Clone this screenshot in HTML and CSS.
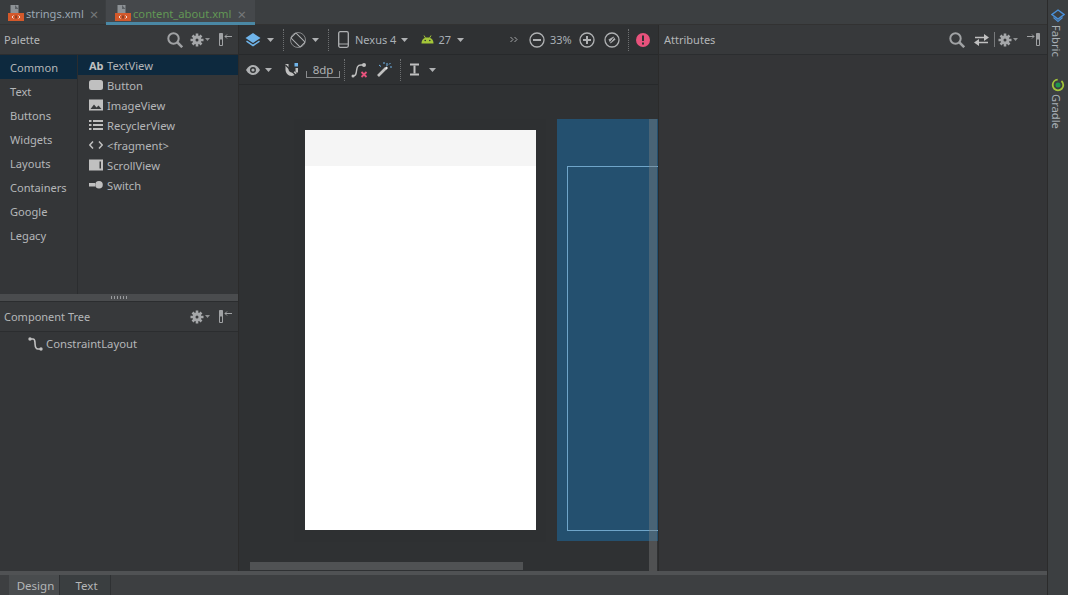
FILE: index.html
```html
<!DOCTYPE html>
<html lang="en">
<head>
<meta charset="utf-8">
<title>content_about.xml</title>
<link rel="stylesheet" href="styles.css">
</head>
<body>
<svg class="defs" width="0" height="0">
  <defs>
    <symbol id="search" viewBox="0 0 16 16"><circle cx="6.500" cy="6.500" r="5.200" fill="none" stroke="currentColor" stroke-width="2"/><path d="M10.400 10.400 15.200 15.200" stroke="currentColor" stroke-width="2.600" fill="none"/></symbol>
    <symbol id="gear" viewBox="0 0 14 14"><path d="M7 .5v13M.5 7h13M2.500 2.500l9 9M11.500 2.500l-9 9" stroke="currentColor" stroke-width="2.600"/><circle cx="7" cy="7" r="4.400" fill="currentColor"/><circle cx="7" cy="7" r="1.500" fill="#3a3c3e"/></symbol>
    <symbol id="pinleft" viewBox="0 0 13 13"><path d="M.5 .5h3v12h-3z" fill="none" stroke="currentColor"/><path d="M.5 .5h3v6h-3z" fill="currentColor"/><path d="M6 3.500h7M6 3.500l2-2M6 3.500l2 2" stroke="currentColor" fill="none"/></symbol>
    <symbol id="xml" viewBox="0 0 16 16"><path d="M2.500 0h8v8h-8z" fill="#8d9296"/><path d="M7 0v4h3.500z" fill="#5b6064"/><path d="M0 8h16v8H0z" fill="#d3592b"/><path d="M5.500 10.500 4 12l1.500 1.500M10.500 10.500 12 12l-1.500 1.500" fill="none" stroke="#f3e1d8"/><path d="M8 10.500v3" stroke="#4a2a20"/></symbol>
    <symbol id="caret" viewBox="0 0 7 4"><path d="M0 0h7L3.500 4z" fill="currentColor"/></symbol>
    <symbol id="dropdown" viewBox="0 0 7 4"><path d="M0 0h7L3.500 4z" fill="#afb1b3"/></symbol>
  </defs>
</svg>
<div class="app">
  <div class="workspace">
    <div class="tabs">
      <div class="tab">
        <svg class="tab-icon"><use href="#xml"/></svg>
        <span class="tab-name">strings.xml</span>
        <span class="tab-close">×</span>
      </div>
      <div class="tab tab-active">
        <svg class="tab-icon"><use href="#xml"/></svg>
        <span class="tab-name tab-name-green">content_about.xml</span>
        <span class="tab-close">×</span>
      </div>
    </div>
    <div class="columns">
      <aside class="left">
        <div class="panel-head">
          <span class="head-title">Palette</span>
          <span class="head-tools">
            <svg class="i16"><use href="#search"/></svg>
            <span class="gear-wrap"><svg class="i14"><use href="#gear"/></svg><svg class="tiny-caret"><use href="#caret"/></svg></span>
            <svg class="i13"><use href="#pinleft"/></svg>
          </span>
        </div>
        <div class="palette">
          <ul class="cats">
            <li class="cat cat-active">Common</li>
            <li class="cat">Text</li>
            <li class="cat">Buttons</li>
            <li class="cat">Widgets</li>
            <li class="cat">Layouts</li>
            <li class="cat">Containers</li>
            <li class="cat">Google</li>
            <li class="cat">Legacy</li>
          </ul>
          <ul class="items">
            <li class="item item-active"><span class="ab">Ab</span>TextView</li>
            <li class="item"><svg class="i14" viewBox="0 0 14 14"><rect y="1" width="14" height="10" rx="2.500" fill="#c0c0c0"/></svg>Button</li>
            <li class="item"><svg class="i14" viewBox="0 0 14 14"><path d="M0 .5h14v11H0z" fill="#c0c0c0"/><path d="M1.500 10 5 5.500l2.500 3 2-2 3 3.500z" fill="#3a3c3e"/></svg>ImageView</li>
            <li class="item"><svg class="i14" viewBox="0 0 14 14"><path d="M0 1h2.500v2H0zM4 1h10v2H4zM0 5h2.500v2H0zM4 5h10v2H4zM0 9h2.500v2H0zM4 9h10v2H4z" fill="#c0c0c0"/></svg>RecyclerView</li>
            <li class="item"><svg class="i14" viewBox="0 0 14 14"><path d="M4 2.500 .8 6 4 9.500M10 2.500 13.200 6 10 9.500" fill="none" stroke="#c0c0c0" stroke-width="1.500"/></svg>&lt;fragment&gt;</li>
            <li class="item"><svg class="i14" viewBox="0 0 14 14"><path d="M0 .5h14v11H0z" fill="#c0c0c0"/><path d="M10.500 2.500h1.500v7h-1.500z" fill="#3a3c3e"/></svg>ScrollView</li>
            <li class="item"><svg class="i14" viewBox="0 0 14 14"><path d="M0 4h6v3.500H0z" fill="#c0c0c0"/><circle cx="10" cy="5.800" r="3.800" fill="#c0c0c0"/></svg>Switch</li>
          </ul>
        </div>
        <div class="grip"><span class="grip-dots"></span></div>
        <div class="panel-head tree-head">
          <span class="head-title">Component Tree</span>
          <span class="head-tools">
            <span class="gear-wrap"><svg class="i14"><use href="#gear"/></svg><svg class="tiny-caret"><use href="#caret"/></svg></span>
            <svg class="i13"><use href="#pinleft"/></svg>
          </span>
        </div>
        <div class="tree">
          <svg class="tree-icon" viewBox="0 0 15 15"><path d="M2 2h3c2 0 1.800 1.500 2 4 .2 3 0 6 3 6h3" fill="none" stroke="#c0c0c0" stroke-width="1.600"/><circle cx="2" cy="2" r="1.700" fill="#c0c0c0"/><circle cx="13" cy="12" r="1.700" fill="#c0c0c0"/></svg>
          <span>ConstraintLayout</span>
        </div>
      </aside>
      <main class="center">
        <div class="toolbar">
          <svg class="tb-layers" viewBox="0 0 16 16"><path d="M8 1 15.500 6 8 11 .5 6z" fill="#6fb4ea"/><path d="M1.500 9.200 8 13.500l6.500-4.300" fill="none" stroke="#6fb4ea" stroke-width="1.500"/></svg>
          <svg class="dd dd-first"><use href="#dropdown"/></svg>
          <span class="sep sep-a"></span>
          <svg class="tb-rotate" viewBox="0 0 16 16"><circle cx="8" cy="8" r="7.500" fill="none" stroke="#9a9c9e" stroke-width=".8"/><rect x="4.500" y="1.500" width="7" height="13" rx="1" transform="rotate(-45 8 8)" fill="#2f3133" stroke="#afb1b3"/></svg>
          <svg class="dd dd-six"><use href="#dropdown"/></svg>
          <span class="sep sep-b"></span>
          <svg class="tb-phone" viewBox="0 0 11 17"><rect x=".7" y=".7" width="9.600" height="15.600" rx="1.500" fill="none" stroke="#afb1b3" stroke-width="1.300"/><path d="M1 13h9" stroke="#afb1b3"/></svg>
          <span class="tb-text tb-device">Nexus 4</span>
          <svg class="dd"><use href="#dropdown"/></svg>
          <svg class="tb-android" viewBox="0 0 13 9"><path d="M.5 8.500C.5 4.500 3 2.500 6.500 2.500s6 2 6 6z" fill="#a4c639"/><path d="M3 .5l1.500 2.500M10 .5 8.500 3" stroke="#a4c639"/><circle cx="4.200" cy="5.500" r=".8" fill="#2f3133"/><circle cx="8.800" cy="5.500" r=".8" fill="#2f3133"/></svg>
          <span class="tb-text tb-api">27</span>
          <svg class="dd dd-six"><use href="#dropdown"/></svg>
          <svg class="chev" viewBox="0 0 8 7"><path d="M.5 1 3 3.500.5 6M4.500 1 7 3.500 4.500 6" fill="none" stroke="#a5a7a9"/></svg>
          <svg class="tb-zoom tb-minus" viewBox="0 0 16 16"><circle cx="8" cy="8" r="7" fill="none" stroke="#afb1b3" stroke-width="1.300"/><path d="M4 8h8" stroke="#afb1b3" stroke-width="2"/></svg>
          <span class="tb-text tb-pct">33%</span>
          <svg class="tb-zoom" viewBox="0 0 16 16"><circle cx="8" cy="8" r="7" fill="none" stroke="#afb1b3" stroke-width="1.300"/><path d="M4 8h8M8 4v8" stroke="#afb1b3" stroke-width="2"/></svg>
          <svg class="tb-zoom tb-fit" viewBox="0 0 16 16"><circle cx="8" cy="8" r="7" fill="none" stroke="#afb1b3" stroke-width="1.300"/><path d="M4.500 7.500l5-3 2 3-5 4z" fill="#afb1b3"/><path d="M6 10.500 10 5.500" stroke="#2f3133"/></svg>
          <span class="sep sep-c"></span>
          <svg class="tb-alert" viewBox="0 0 14 14"><circle cx="7" cy="7" r="7" fill="#e8527c"/><path d="M6 2.500h2v5.500H6zM6 9.500h2v2H6z" fill="#2f3133"/></svg>
        </div>
        <div class="toolbar toolbar-second">
          <svg class="tb-eye" viewBox="0 0 14 10"><path d="M0 5c2-3.500 4.500-5 7-5s5 1.500 7 5c-2 3.500-4.500 5-7 5S2 8.500 0 5z" fill="#afb1b3"/><circle cx="7" cy="5" r="3" fill="#2f3133"/><circle cx="7" cy="5" r="1.600" fill="#afb1b3"/></svg>
          <svg class="dd"><use href="#dropdown"/></svg>
          <svg class="tb-magnet" viewBox="0 0 14 14"><path d="M.5 1 3.500 1v5c0 2 1.500 3.500 3.500 3.500 1 0 2-.4 2.800-1.200l1.800 1.900C10 12 8.500 13 6.500 13 3 13 .5 10 .5 6.500z" fill="#c0c0c0"/><path d="M.5 2l11 11" stroke="#2f3133" stroke-width="1.200"/><path d="M9.500 0H13v3.500H9.500z" fill="#6fb4ea"/><path d="M10.500 5H13v4.500h-2.500z" fill="#c0c0c0"/></svg>
          <span class="margin-box">8dp</span>
          <span class="sep sep-d"></span>
          <svg class="tb-clear" viewBox="0 0 17 16"><path d="M2 14c3 0 3-2 3.500-5S6 3 10 3h2" fill="none" stroke="#c0c0c0" stroke-width="1.400"/><circle cx="13" cy="3" r="2" fill="#c0c0c0"/><circle cx="2" cy="14" r="1.500" fill="#c0c0c0"/><path d="M10.500 10l5 5M15.500 10l-5 5" stroke="#e8527c" stroke-width="1.800"/></svg>
          <svg class="tb-wand" viewBox="0 0 15 15"><path d="M1 14 9 6" stroke="#c0c0c0" stroke-width="2.600"/><path d="M8 6l1.500-1.500L11 6l-1.500 1.500z" fill="#eee"/><path d="M10 1v3M13 5h2M12 2.500 13.500 1M2 3 4 4.500M7 0v2" stroke="#6fb4ea"/></svg>
          <span class="sep sep-e"></span>
          <svg class="tb-text-cursor" viewBox="0 0 9 13"><path d="M0 .5h9v2H0zM0 10.500h9v2H0z" fill="#c0c0c0"/><path d="M3.500 2.500h2v8h-2z" fill="#c0c0c0"/></svg>
          <svg class="dd dd-last"><use href="#dropdown"/></svg>
        </div>
        <div class="canvas">
          <div class="shadow"></div>
          <div class="phone"><div class="statusbar"></div></div>
          <div class="blueprint"><div class="blue-frame"></div></div>
          <div class="vscroll"></div>
          <div class="hscroll"></div>
        </div>
      </main>
      <section class="right">
        <div class="panel-head attr-head">
          <span class="head-title">Attributes</span>
          <span class="head-tools attr-tools">
            <svg class="i16"><use href="#search"/></svg>
            <svg class="swap" viewBox="0 0 15 12"><path d="M1 3.500h10M4 8.500h10" stroke="#c0c0c0" stroke-width="1.600"/><path d="M10 0l5 3.500-5 3.500zM5 5l-5 3.500L5 12z" fill="#c0c0c0"/></svg>
            <span class="thin-sep"></span>
            <span class="gear-wrap"><svg class="i14"><use href="#gear"/></svg><svg class="tiny-caret"><use href="#caret"/></svg></span>
            <svg class="i13 flip"><use href="#pinleft"/></svg>
          </span>
        </div>
      </section>
    </div>
    <div class="bottom">
      <span class="btab btab-active">Design</span>
      <span class="btab btab-text">Text</span>
    </div>
  </div>
  <aside class="strip">
    <div class="strip-item">
      <svg class="strip-icon" viewBox="0 0 14 14"><path d="M7 1 13 5.500 7 10 1 5.500z" fill="none" stroke="#4a90d9" stroke-width="1.400"/><path d="M2.500 8.500 7 12.500l4.500-4" fill="none" stroke="#4a90d9" stroke-width="1.200"/></svg>
      <span class="strip-label">Fabric</span>
    </div>
    <div class="strip-item strip-gradle">
      <svg class="strip-icon" viewBox="0 0 14 14"><circle cx="7" cy="7" r="5.300" fill="none" stroke="#a4c639" stroke-width="1.800" stroke-dasharray="24 4"/><circle cx="7" cy="7" r="2.500" fill="#1f9a4d"/></svg>
      <span class="strip-label">Gradle</span>
    </div>
  </aside>
</div>
</body>
</html>
```
FILE: styles.css
```css
* { box-sizing: border-box; }
html, body { margin: 0; padding: 0; }
body {
  width: 1068px;
  height: 595px;
  overflow: hidden;
  background: #3c3f41;
  color: #bbbbbb;
  font-family: "Noto Sans", "Open Sans", sans-serif;
  font-size: 11.5px;
  line-height: 16px;
}
ul { list-style: none; margin: 0; padding: 0; }
svg { display: block; flex: none; }
.defs { position: absolute; }

.app { display: flex; width: 1068px; height: 595px; }
.workspace { width: 1047px; display: flex; flex-direction: column; }

.tabs { height: 25px; display: flex; background: #3c3f41; border-bottom: 1px solid #323232; }
.tab { width: 105px; height: 24px; padding: 5px 0 0 8px; display: flex; align-items: flex-start; background: #393c3e; }
.tab-active { width: 149px; height: 25px; margin-left: 1px; padding-left: 9px; background: #45484b; border-bottom: 3px solid #4a88a5; }
.tab-icon { width: 16px; height: 16px; }
.tab-name { margin: 1px 0 0 2px; color: #9aa7b3; font-size: 11.1px; }
.tab-name-green { color: #629755; margin-left: 2px; font-size: 11.2px; }
.tab-close { margin: 0 0 0 6px; color: #75787a; font-size: 15px; line-height: 18px; }

.columns { flex: 1; display: flex; min-height: 0; }

.left { width: 239px; display: flex; flex-direction: column; background: #343638; border-right: 1px solid #2b2b2b; }
.panel-head { height: 30px; display: flex; align-items: center; justify-content: space-between; padding-left: 4px; background: #37393b; border-bottom: 1px solid #2b2d2f; color: #bbbbbb; }
.head-title { font-size: 11px; color: #b4b6b8; }
.head-tools { display: flex; align-items: center; color: #a0a2a4; padding-right: 6px; }
.head-tools > svg + .gear-wrap { margin-left: 7px; }
.gear-wrap { display: flex; align-items: center; gap: 1px; margin-right: 9px; }
.tiny-caret { width: 5px; height: 3px; color: #8f9193; }
.i16 { width: 16px; height: 16px; }
.i14 { width: 14px; height: 14px; color: #a5a7a9; }
.i13 { width: 13px; height: 13px; }
.flip { transform: scaleX(-1); }

.palette { height: 239px; display: flex; }
.cats { width: 78px; border-right: 1px solid #2b2d2f; }
.cat { height: 24px; padding: 2px 0 0 10px; display: flex; align-items: center; font-size: 11.1px; color: #b4b6b8; }
.cat-active { background: #0d293e; }
.items { flex: 1; }
.item { height: 20px; padding: 2px 0 0 11px; display: flex; align-items: center; gap: 4px; font-size: 11.2px; color: #b4b6b8; }
.item-active { background: #0d293e; }
.ab { width: 14px; font-weight: 700; font-size: 11px; color: #c0c0c0; }

.grip { height: 8px; display: flex; align-items: center; justify-content: center; background: #4a4c4e; border-bottom: 1px solid #2b2d2f; }
.grip-dots { width: 16px; height: 3px; background: repeating-linear-gradient(90deg, #9a9c9e 0 1px, transparent 1px 3px); }
.tree-head { height: 30px; }
.tree { height: 24px; padding-left: 28px; display: flex; align-items: center; gap: 3px; font-size: 11.3px; color: #b4b6b8; }
.tree-icon { width: 15px; height: 15px; }

.center { width: 420px; display: flex; flex-direction: column; background: #2f3133; border-right: 1px solid #2b2b2b; }
.toolbar { height: 30px; display: flex; align-items: center; background: #2f3133; border-bottom: 1px solid #27292b; padding-left: 6px; color: #afb1b3; }
.toolbar-second { height: 30px; padding-left: 7px; }
.dd { width: 7px; height: 4px; margin-left: 5px; }
.dd-first { margin-left: 6px; }
.dd-six { margin-left: 6px; }
.sep { width: 0; height: 22px; border-left: 1px dotted #6e7072; }
.sep-a { margin-left: 9px; margin-right: 6px; }
.sep-b { margin-left: 9px; margin-right: 9px; }
.sep-c { margin-left: 8px; margin-right: 7px; }
.sep-d { margin-left: 4px; margin-right: 6px; }
.sep-e { margin-left: 8px; margin-right: 9px; }
.tb-layers { width: 16px; height: 16px; }
.tb-rotate { width: 16px; height: 16px; }
.tb-phone { width: 11px; height: 17px; }
.tb-text { font-size: 11px; color: #a9b0b6; }
.tb-device { margin-left: 6px; }
.tb-android { width: 13px; height: 9px; margin-left: 13px; }
.tb-api { margin-left: 4px; }
.chev { width: 8px; height: 7px; margin-left: 46px; }
.tb-zoom { width: 16px; height: 16px; }
.tb-minus { margin-left: 11px; }
.tb-pct { margin: 0 7px 0 5px; }
.tb-fit { margin-left: 9px; }
.tb-alert { width: 14px; height: 14px; }
.tb-eye { width: 14px; height: 10px; }
.tb-magnet { width: 14px; height: 14px; margin-left: 13px; }
.margin-box { width: 34px; height: 14px; margin: 3px 0 0 7px; text-align: center; line-height: 12px; font-size: 11.5px; color: #afb1b3; border: 1px solid #8a8c8e; border-top: 0; border-image: linear-gradient(#2f3133 55%, #8a8c8e 55%) 1; }
.tb-clear { width: 17px; height: 16px; }
.tb-wand { width: 15px; height: 15px; margin-left: 9px; }
.tb-text-cursor { width: 9px; height: 13px; }
.dd-last { margin-left: 10px; }

.canvas { flex: 1; position: relative; overflow: hidden; background: #2f3133; }
.shadow { position: absolute; left: 55px; top: 34px; width: 252px; height: 423px; background: #2e3032; }
.phone { position: absolute; left: 66px; top: 45px; width: 231px; height: 400px; background: #ffffff; }
.statusbar { height: 36px; background: #f5f5f5; }
.blueprint { position: absolute; left: 318px; top: 34px; width: 101px; height: 422px; background: #24506f; }
.blue-frame { position: absolute; left: 10px; top: 47px; width: 100px; height: 365px; border: 1px solid #6fa5c9; }
.vscroll { position: absolute; left: 410px; top: 34px; width: 8px; bottom: 0; background: rgba(130, 130, 130, 0.4); }
.hscroll { position: absolute; left: 11px; top: 477px; width: 273px; height: 8px; background: #505254; }

.right { flex: 1; background: #343537; }
.attr-head { padding-left: 5px; }
.attr-tools { padding-right: 7px; }
.swap { width: 15px; height: 12px; margin-left: 9px; }
.thin-sep { width: 1px; height: 15px; margin: 0 3px 0 5px; background: #77797b; }

.bottom { height: 24px; display: flex; padding-left: 9px; background: #3d3f41; border-top: 4px solid #505254; }
.btab { width: 51px; padding: 1px 0 0 3px; text-align: center; font-size: 11.5px; color: #b4b6b8; background: #3a3e40; border-right: 1px solid #2f3133; line-height: 20px; }
.btab-active { background: #494c4e; }

.strip { width: 21px; display: flex; flex-direction: column; align-items: center; padding-top: 9px; background: #3c3f41; border-left: 1px solid #2b2b2b; }
.strip-item { display: flex; flex-direction: column; align-items: center; gap: 2px; }
.strip-gradle { margin-top: 21px; }
.strip-icon { width: 14px; height: 14px; }
.strip-label { writing-mode: vertical-rl; margin-right: 4px; font-size: 11.2px; color: #a9b0b6; }
```
